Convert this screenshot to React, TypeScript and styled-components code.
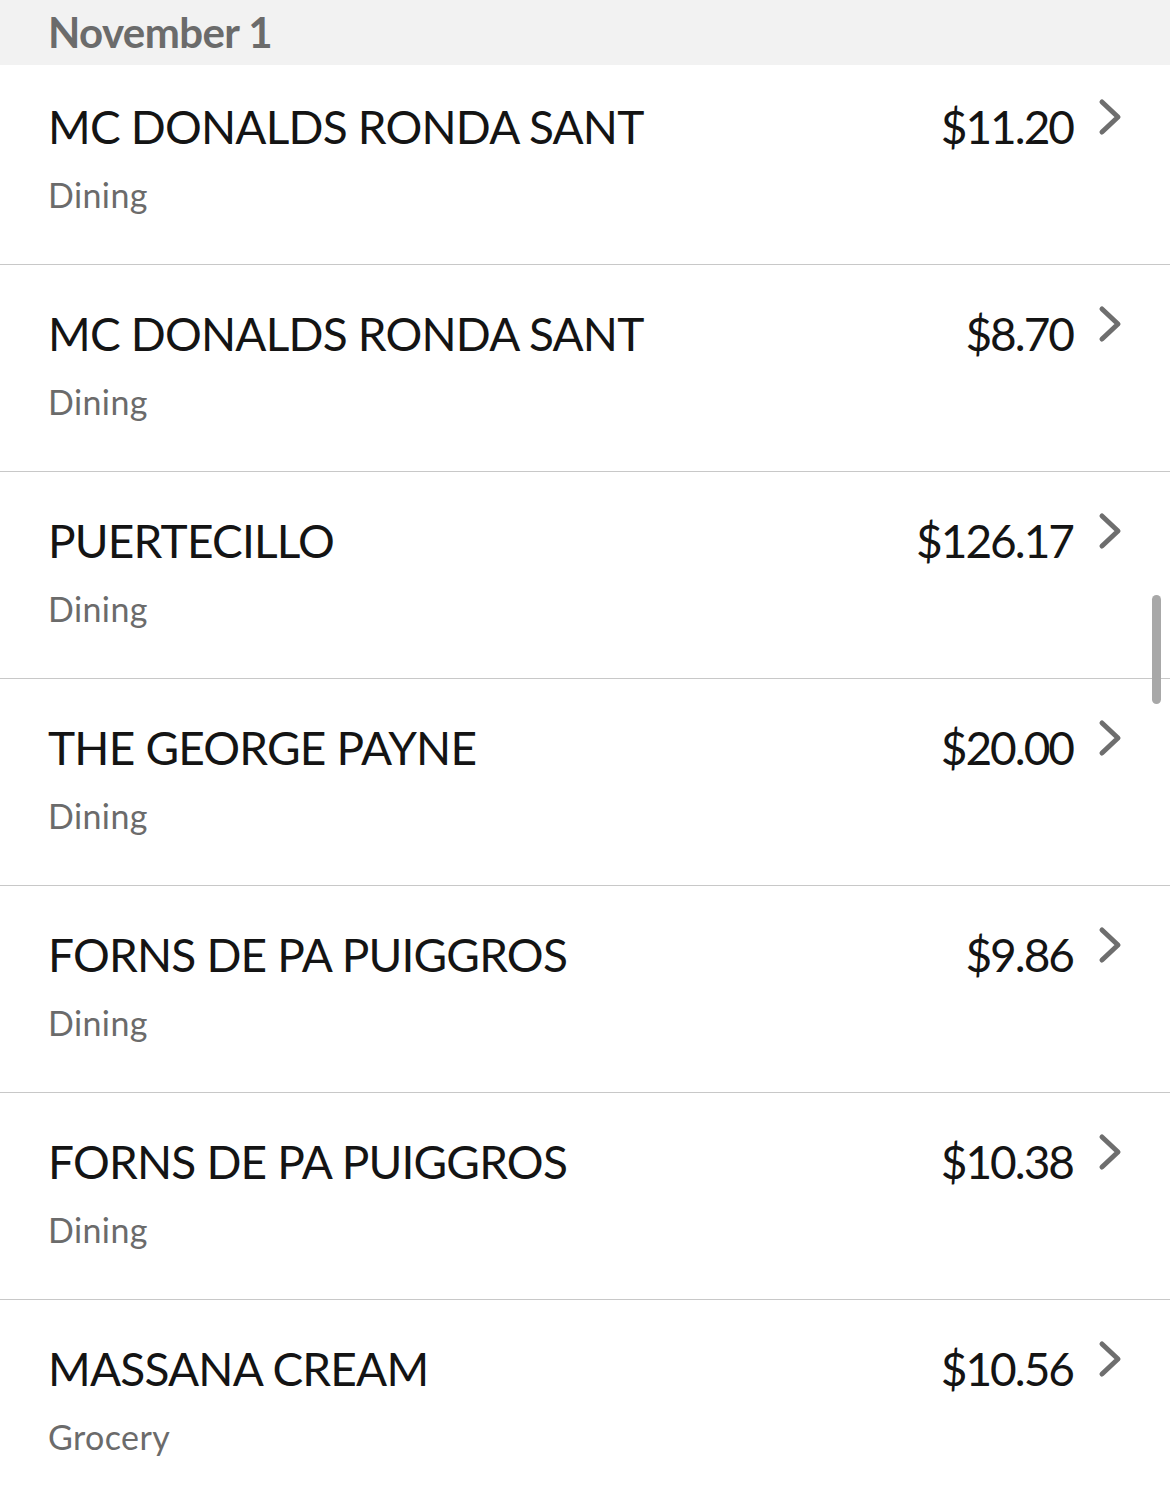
import React from 'react';
import styled, { createGlobalStyle } from 'styled-components';

const GlobalStyle = createGlobalStyle`
  html, body {
    margin: 0;
    padding: 0;
    background: #ffffff;
  }
  body {
    font-family: Lato, "Open Sans", sans-serif;
    -webkit-font-smoothing: antialiased;
  }
`;

const Screen = styled.div`
  position: relative;
  width: 1170px;
  height: 1503px;
  overflow: hidden;
  background: #ffffff;
`;

const DateHeader = styled.div`
  position: relative;
  z-index: 1;
  height: 65px;
  background: #f2f2f2;
  padding-left: 48px;
  box-sizing: border-box;
  font-size: 42px;
  font-weight: 700;
  letter-spacing: -0.6px;
  color: #6b6b6b;
  display: flex;
  align-items: flex-end;
`;

const HeaderLabel = styled.span`
  display: block;
  line-height: 1;
  margin-bottom: 12px;
`;

const List = styled.div`
  margin-top: -7px;
`;

const Row = styled.div`
  display: grid;
  grid-template-columns: 1fr auto auto;
  column-gap: 25px;
  padding: 41px 48px 49px 48px;
  border-bottom: 1px solid #c8c8c8;
`;

const Info = styled.div`
  display: flex;
  flex-direction: column;
  min-width: 0;
`;

const Merchant = styled.div`
  font-size: 46px;
  line-height: 56px;
  letter-spacing: -0.8px;
  color: #141414;
  white-space: nowrap;
`;

const Category = styled.div`
  margin-top: 20px;
  font-size: 34px;
  line-height: 40px;
  letter-spacing: 0.4px;
  color: #6b6b6b;
`;

const Amount = styled.div`
  font-size: 46px;
  line-height: 56px;
  letter-spacing: -2px;
  color: #141414;
  text-align: right;
`;

const Chevron = styled.svg`
  display: block;
  margin-top: -1px;
  width: 24px;
  height: 38px;
`;

const ScrollThumb = styled.div`
  position: absolute;
  top: 595px;
  right: 9px;
  width: 9px;
  height: 109px;
  border-radius: 5px;
  background: #a8a8a8;
  z-index: 2;
`;

interface Transaction {
  merchant: string;
  category: string;
  amount: string;
}

const transactions: Transaction[] = [
  { merchant: 'MC DONALDS RONDA SANT', category: 'Dining', amount: '$11.20' },
  { merchant: 'MC DONALDS RONDA SANT', category: 'Dining', amount: '$8.70' },
  { merchant: 'PUERTECILLO', category: 'Dining', amount: '$126.17' },
  { merchant: 'THE GEORGE PAYNE', category: 'Dining', amount: '$20.00' },
  { merchant: 'FORNS DE PA PUIGGROS', category: 'Dining', amount: '$9.86' },
  { merchant: 'FORNS DE PA PUIGGROS', category: 'Dining', amount: '$10.38' },
  { merchant: 'MASSANA CREAM', category: 'Grocery', amount: '$10.56' }
];

const ChevronIcon = () => (
  <Chevron viewBox="0 0 24 38">
    <path
      d="M4 4 L20 19 L4 34"
      fill="none"
      stroke="#6e6e6e"
      strokeWidth="5"
      strokeLinecap="round"
      strokeLinejoin="round"
    />
  </Chevron>
);

export default function App() {
  return (
    <Screen>
      <GlobalStyle />
      <DateHeader>
        <HeaderLabel>November 1</HeaderLabel>
      </DateHeader>
      <List>
        {transactions.map((t, i) => (
          <Row key={i}>
            <Info>
              <Merchant>{t.merchant}</Merchant>
              <Category>{t.category}</Category>
            </Info>
            <Amount>{t.amount}</Amount>
            <ChevronIcon />
          </Row>
        ))}
      </List>
      <ScrollThumb />
    </Screen>
  );
}
